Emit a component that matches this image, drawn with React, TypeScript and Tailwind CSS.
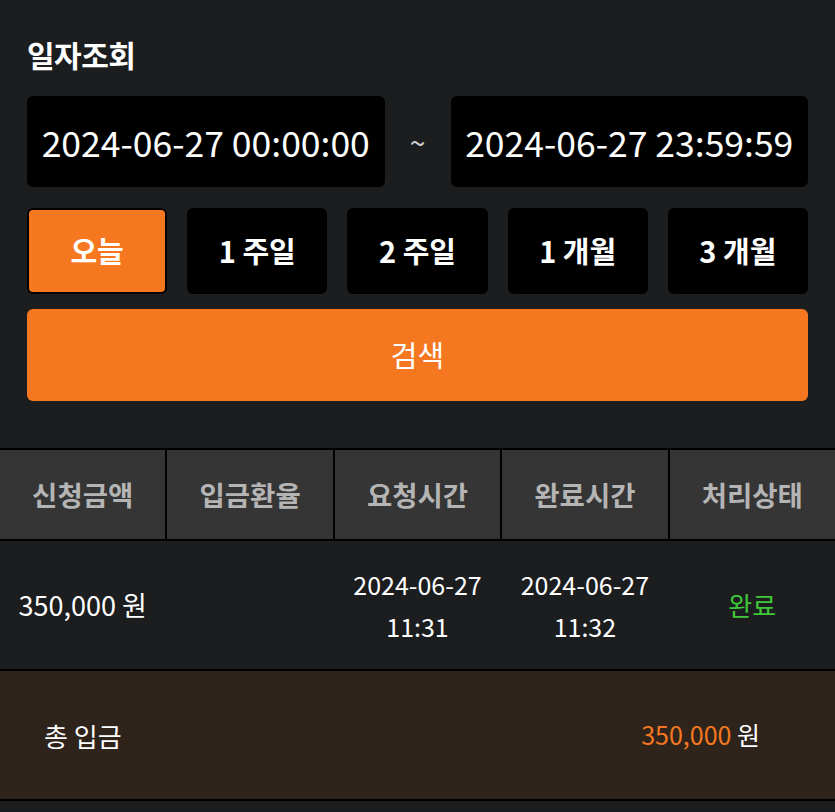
import React from "react";

const presets = ["오늘", "1 주일", "2 주일", "1 개월", "3 개월"];
const headers = ["신청금액", "입금환율", "요청시간", "완료시간", "처리상태"];

export default function App() {
  return (
    <div
      className="w-[835px] min-h-[812px] bg-[#1b1d1f] text-white"
      style={{ fontFamily: '"Noto Sans CJK KR", "Noto Sans", sans-serif' }}
    >
      <div className="px-[27px] pt-[34px]">
        <h1 className="text-[30px] font-bold leading-[40px] tracking-[-0.5px]">일자조회</h1>
        <div className="mt-[22px] flex items-center">
          <div className="flex h-[91px] flex-1 items-center justify-center rounded-[6px] bg-black text-[35.5px] leading-none">
            2024-06-27 00:00:00
          </div>
          <div className="flex w-[66px] justify-center text-[28px] text-[#d0d0d0]">~</div>
          <div className="flex h-[91px] flex-1 items-center justify-center rounded-[6px] bg-black text-[35.5px] leading-none">
            2024-06-27 23:59:59
          </div>
        </div>
        <div className="mt-[21px] grid grid-cols-5 gap-[20px]">
          {presets.map((p, i) => (
            <button
              key={p}
              className={
                i === 0
                  ? "flex h-[86px] items-center justify-center rounded-[6px] border-2 border-black bg-[#f57820] text-[29px] font-bold"
                  : "flex h-[86px] items-center justify-center rounded-[6px] bg-black text-[29px] font-bold"
              }
            >
              {p}
            </button>
          ))}
        </div>
        <button className="mt-[15px] flex h-[92px] w-full items-center justify-center rounded-[6px] bg-[#f57820] text-[29px] font-normal">
          검색
        </button>
      </div>

      <div className="mt-[47px] border-y-2 border-black">
        <div className="grid grid-cols-5 gap-[2px] bg-black">
          {headers.map((h) => (
            <div
              key={h}
              className="flex h-[89px] items-center justify-center bg-[#353535] text-[27.5px] font-bold text-[#b4b4b4]"
            >
              {h}
            </div>
          ))}
        </div>
      </div>
      <div className="grid h-[128px] grid-cols-5 gap-[2px] text-[25px] leading-[42px]">
        <div className="flex items-center justify-center text-[27px]">350,000 원</div>
        <div />
        <div className="flex flex-col items-center justify-center">
          <span>2024-06-27</span>
          <span>11:31</span>
        </div>
        <div className="flex flex-col items-center justify-center">
          <span>2024-06-27</span>
          <span>11:32</span>
        </div>
        <div className="flex items-center justify-center text-[26px] text-[#3fc83a]">완료</div>
      </div>
      <div className="flex h-[132px] items-center justify-between border-y-2 border-black bg-[#2f241c] pl-[44px] pr-[75px] text-[25px]">
        <span className="text-[26px]">총 입금</span>
        <span>
          <span className="text-[#f57820]">350,000</span> 원
        </span>
      </div>
    </div>
  );
}
